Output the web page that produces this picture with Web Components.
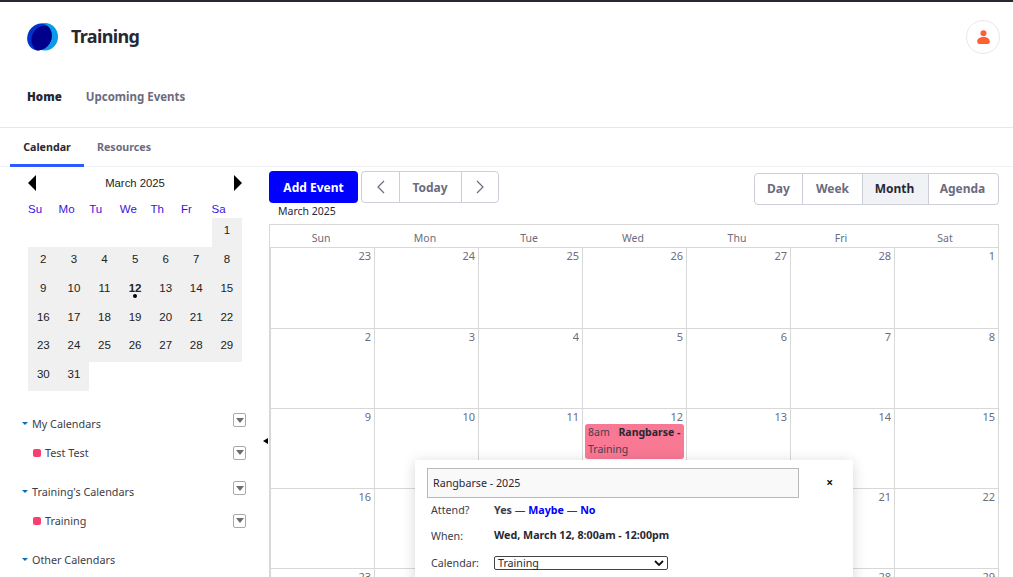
<!DOCTYPE html>
<html><head><meta charset="utf-8">
<style>
html,body{margin:0;padding:0;height:577px;overflow:hidden;background:#fff}
body{font-family:"Noto Sans",sans-serif;color:#272833;}
app-shell{display:block;height:577px;overflow:hidden}
</style></head><body>
<app-shell></app-shell>
<script>
const FONT='"Noto Sans","Open Sans",sans-serif';
function def(name,css,html){
  customElements.define(name,class extends HTMLElement{
    connectedCallback(){
      if(this.shadowRoot)return;
      const r=this.attachShadow({mode:'open'});
      r.innerHTML=`<style>${css}</style>`+(typeof html==='function'?html(this):html);
    }
  });
}
def('site-header',`
:host{display:block;height:125px;border-top:2px solid #272833;border-bottom:1px solid #e7e7ed;font-family:${FONT};box-sizing:content-box}
.top{display:flex;align-items:center;height:70px;padding:0 13px 0 26px}
.title{font-size:18px;font-weight:700;color:#272833;margin-left:13px;flex:1;letter-spacing:-.65px;line-height:20px;padding-bottom:2px}
.user{width:32px;height:32px;border:1px solid #e7e7ed;border-radius:50%;display:flex;align-items:center;justify-content:center}
nav{display:flex;gap:24px;padding:17px 0 0 27px;font-size:11.500px;font-weight:700;color:#6b6c7e;line-height:16px}
nav b{color:#272833}
`,`<div class="top">
<svg width="32" height="30" viewBox="26 22 32 30"><defs><clipPath id="c"><ellipse cx="45" cy="36.800" rx="13" ry="13.800"/></clipPath></defs><ellipse cx="45" cy="36.800" rx="13" ry="13.800" fill="#0b9ae8"/><ellipse cx="39.500" cy="37" rx="12" ry="13.700" transform="rotate(25 39.500 37)" fill="#0033cc"/><ellipse cx="39.500" cy="37" rx="12" ry="13.700" transform="rotate(25 39.500 37)" fill="#00008b" clip-path="url(#c)"/></svg>
<div class="title">Training</div>
<div class="user"><svg width="13" height="15" viewBox="0 0 13 15"><circle cx="6.500" cy="3.300" r="3" fill="#ff5f32"/><path d="M.2 11.500c0-3 2.500-4.500 6.300-4.500s6.300 1.500 6.300 4.500c0 1.700-1 2.500-2 2.500H2.200c-1 0-2-.8-2-2.500z" fill="#ff5f32"/></svg></div>
</div><nav><b>Home</b><span>Upcoming Events</span></nav>`);
def('tab-bar',`
:host{display:flex;height:38px;border-bottom:1px solid #f1f2f5;font-family:${FONT};font-size:10.700px;font-weight:700;color:#6b6c7e;padding-left:10px;box-sizing:content-box}
span{display:flex;align-items:center;justify-content:center;height:39px;box-sizing:border-box;padding-top:2px;padding-bottom:3px}
.a{width:74px;color:#272833;border-bottom:3px solid #2e5aff;padding-bottom:0}
.b{width:80px}
`,`<span class="a">Calendar</span><span class="b">Resources</span>`);
def('mini-cal',`
:host{display:block;width:214px;margin-left:28px;font-family:"Liberation Sans",Arial,sans-serif;color:#222}
.head{display:flex;align-items:center;justify-content:space-between;height:31px;font-size:11.300px}
.l{width:0;height:0;border:8px solid transparent;border-left:0;border-right-color:#000}
.r{width:0;height:0;border:8px solid transparent;border-right:0;border-left-color:#000}
.dow,.g{display:grid;grid-template-columns:repeat(7,30.600px)}
.dow{height:20px;line-height:22px;align-items:start;color:#3a14e0;font-size:11.500px}
.g{grid-auto-rows:28.780px;font-size:11.500px}
.g span{background:#f0f0f0;display:flex;align-items:center;justify-content:center;position:relative;padding-bottom:4px;box-sizing:border-box}
.g span.e{background:none}
.t{font-weight:700}
.t::after{content:"";position:absolute;left:50%;top:18.500px;width:4px;height:4px;margin-left:-2px;border-radius:50%;background:#000}
`,()=>{
 let cells='';for(let i=0;i<6;i++)cells+='<span class="e"></span>';
 for(let d=1;d<=31;d++)cells+=`<span${d==12?' class="t"':''}>${d}</span>`;
 return `<div class="head"><i class="l"></i><span>March 2025</span><i class="r"></i></div>
 <div class="dow"><span>Su</span><span>Mo</span><span>Tu</span><span>We</span><span>Th</span><span>Fr</span><span>Sa</span></div>
 <div class="g">${cells}</div>`;
});
def('cal-row',`
:host{display:flex;align-items:center;font-family:${FONT};font-size:10.800px;color:#3b3d4a;height:20px;padding-left:22px;width:246px;box-sizing:border-box}
.tri{width:0;height:0;border:3px solid transparent;border-top:3.500px solid #0b6fb8;border-bottom:0;margin-right:4px}
.dot{width:8px;height:8px;border-radius:2px;background:#f7406f;margin:1px 4px 0 11px}
.menu{margin-left:auto;width:11px;height:12px;border:1px solid #a9a9a9;border-radius:2px;display:flex;align-items:center;justify-content:center;background:#fff}
.menu i{width:0;height:0;border:4.500px solid transparent;border-top:5px solid #6d6d6d;border-bottom:0}
:host([head]) .menu{margin-top:-7px}
`,h=>`${h.hasAttribute('head')?'<i class="tri"></i>':'<i class="dot"></i>'}<span>${h.getAttribute('label')}</span>${h.hasAttribute('nomenu')?'':'<span class="menu"><i></i></span>'}`);
def('side-bar',`
:host{display:block;width:269px;flex:none;position:relative;font-family:${FONT}}
.cals{display:flex;flex-direction:column;margin-top:23px}
.collapse{position:absolute;left:263px;top:271px;width:0;height:0;border:3.500px solid transparent;border-left:0;border-right:5px solid #000}
`,`<mini-cal></mini-cal><div class="cals">
<cal-row head label="My Calendars"></cal-row>
<cal-row style="margin-top:9px" label="Test Test"></cal-row>
<cal-row head style="margin-top:19px" label="Training's Calendars"></cal-row>
<cal-row style="margin-top:9px" label="Training"></cal-row>
<cal-row head nomenu style="margin-top:19px" label="Other Calendars"></cal-row>
</div><i class="collapse"></i>`);
def('btn-group',`
:host{display:inline-flex;height:30px;border:1px solid #cdced9;border-radius:4px;box-sizing:content-box;font-family:${FONT};font-size:12px;font-weight:700;color:#6b6c7e;background:#fff;overflow:hidden}
::slotted(span){display:flex;align-items:center;justify-content:center;border-left:1px solid #cdced9;box-sizing:border-box}
::slotted(span:first-child){border-left:0}
`,`<slot></slot>`);
def('cal-toolbar',`
:host{display:flex;align-items:flex-start;height:57px;padding-top:4px;box-sizing:border-box;font-family:${FONT};position:relative}
.add{width:89px;height:32px;background:#0000ff;border-radius:4px;color:#fff;font-weight:700;font-size:12px;display:flex;align-items:center;justify-content:center}
.nav{margin-left:3px}
.sp{flex:1}
.views{margin-top:2px;margin-right:14px}
.cur{position:absolute;left:9px;top:37px;font-size:10.500px;color:#272833;line-height:14px}
svg{display:block}
`,`<div class="add">Add Event</div>
<btn-group class="nav"><span style="width:37px"><svg width="10" height="14" viewBox="0 0 10 14"><path d="M8 1L2 7l6 6" fill="none" stroke="#6b6c7e" stroke-width="1.200"/></svg></span><span style="width:62px;padding-right:1px">Today</span><span style="width:37px"><svg width="10" height="14" viewBox="0 0 10 14"><path d="M2 1l6 6-6 6" fill="none" stroke="#6b6c7e" stroke-width="1.200"/></svg></span></btn-group>
<div class="sp"></div>
<btn-group class="views"><span style="width:47px;padding-bottom:2px">Day</span><span style="width:60px;padding-bottom:2px">Week</span><span style="width:66px;padding:0 2px 2px 0;background:#f1f2f5;color:#272833">Month</span><span style="width:70px;padding:0 2px 2px 0">Agenda</span></btn-group>
<div class="cur">March 2025</div>`);
def('cal-event',`
:host{display:block;background:#f97894;border-radius:3px;margin:0 0 0 2px;width:99px;height:35px;padding:0 0 0 3px;box-sizing:border-box;font-size:10.500px;line-height:17px;color:#4a3f4e;overflow:hidden;font-family:${FONT};text-align:left}
b{color:#272833;margin-left:6px;white-space:nowrap}
`,`<span>8am</span> <b>Rangbarse -</b><br><span>Training</span>`);
def('month-grid',`
:host{display:block;margin-right:14px;font-family:${FONT};border-top:1px solid #d8d8d8;border-right:1px solid #d8d8d8;border-left:1px solid #d8d8d8;color:#6b6c7e}
.g{display:grid;grid-template-columns:repeat(7,104px)}
.h{height:23px;display:flex;align-items:center;justify-content:center;border-bottom:1px solid #d8d8d8;font-size:10.500px;padding:4px 2px 0 0;box-sizing:border-box}
.d{height:80px;border-bottom:1px solid #d8d8d8;border-left:1px solid #d8d8d8;box-sizing:border-box;text-align:right;padding:1px 3px 0 0;line-height:14px;font-size:11px}
.d.first{height:81px}
.d.ev{padding-right:0}
.d.ev>span{display:block;padding-right:3px}
`,()=>{
 const names=['Sun','Mon','Tue','Wed','Thu','Fri','Sat'];
 const days=[23,24,25,26,27,28,1,2,3,4,5,6,7,8,9,10,11,12,13,14,15,16,17,18,19,20,21,22,23,24,25,26,27,28,29];
 return `<div class="g">${names.map(n=>`<div class="h">${n}</div>`).join('')}${days.map((d,i)=>i==17?`<div class="d ev"><span>${d}</span><cal-event></cal-event></div>`:`<div class="d${i<7?' first':''}">${d}</div>`).join('')}</div>`;
});
def('event-popup',`
:host{position:absolute;left:415px;top:460px;width:438px;height:130px;background:#fff;box-shadow:0 2px 14px rgba(0,0,0,.16);border-radius:2px;font-family:${FONT};font-size:10.700px;color:#3b3d4a;padding:8px 12px;box-sizing:border-box}
.t{display:flex;align-items:center}
.in{width:372px;height:30px;box-sizing:border-box;background:#f9f9f9;border:1px solid #b9b9b9;display:flex;align-items:center;padding-left:5px;color:#272833}
.x{margin-left:auto;margin-right:8px;font-weight:700;font-size:12px;color:#111;line-height:1}
.r{display:grid;grid-template-columns:63px 1fr;padding-left:4px;align-items:center}
b{color:#3b3d4a}a{color:#0000ff;font-weight:700}
.when{color:#272833;margin-top:-2px}
.sel{width:174px;height:14px;border:1px solid #444;border-radius:2px;box-sizing:border-box;display:flex;align-items:center;justify-content:space-between;padding:0 3px;color:#272833;background:#fff;line-height:12px}
`,`<div class="t"><div class="in">Rangbarse - 2025</div><span class="x">×</span></div>
<div class="r" style="height:24px;margin-bottom:1px"><span>Attend?</span><span><b>Yes</b> — <a>Maybe</a> — <a>No</a></span></div>
<div class="r" style="height:26px"><span>When:</span><b class="when">Wed, March 12, 8:00am - 12:00pm</b></div>
<div class="r" style="height:28px"><span>Calendar:</span><span class="sel">Training<svg width="10" height="6" viewBox="0 0 10 6"><path d="M1 1l4 4 4-4" fill="none" stroke="#111" stroke-width="1.800"/></svg></span></div>`);
def('app-shell',`
:host{display:block;position:relative}
.main{display:flex}
.right{flex:1;min-width:0}
`,`<site-header></site-header><tab-bar></tab-bar>
<div class="main"><side-bar></side-bar><div class="right"><cal-toolbar></cal-toolbar><month-grid></month-grid></div></div>
<event-popup></event-popup>`);
</script></body></html>
